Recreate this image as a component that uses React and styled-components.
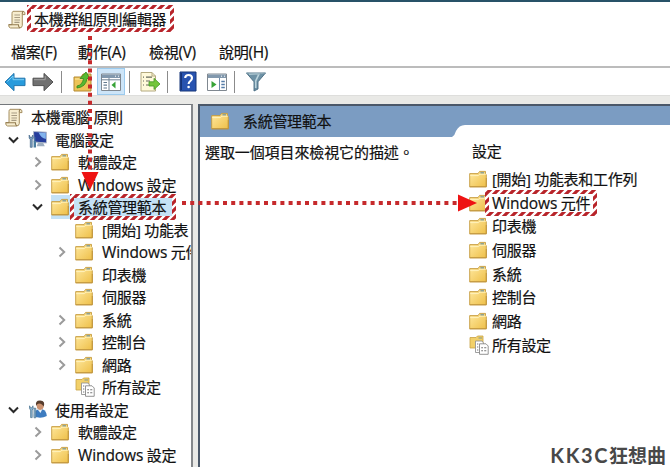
import React from "react";
import styled, { createGlobalStyle } from "styled-components";

const Global = createGlobalStyle`
  * { box-sizing: border-box; }
  body { margin: 0; background: #fff; overflow: hidden; }
`;

const Window = styled.div`
  position: relative;
  display: flex;
  flex-direction: column;
  width: 670px;
  height: 467px;
  overflow: hidden;
  background: #fff;
  border-top: 2px solid #285268;
  color: #111;
  font-family: "Open Sans", "Noto Sans CJK TC", sans-serif;
  font-size: 15px;
  letter-spacing: -0.3px;
  white-space: pre;
  -webkit-text-stroke: 0.2px #111;
  svg { display: block; flex: none; }
`;

const TitleBar = styled.header`
  display: flex;
  align-items: center;
  gap: 8px;
  height: 36px;
  padding: 0 0 2px 8px;
`;

const MenuBar = styled.nav`
  display: flex;
  height: 28px;
  padding: 0 0 1px 11px;
  align-items: center;
`;

const MenuItem = styled.span`
  flex: none;
  width: ${(p) => p.$width}px;
  line-height: 26px;
`;

const Toolbar = styled.div`
  display: flex;
  align-items: center;
  height: 29px;
  padding-left: 4px;
  border-top: 2px solid #bcbcbc;
`;

const Tool = styled.span`
  display: flex;
  align-items: center;
  justify-content: center;
  flex: none;
  width: ${(p) => (p.$active ? 28 : 22)}px;
  height: 27px;
  margin-right: ${(p) => p.$gap || 0}px;
  background: ${(p) => (p.$active ? "#cde5f8" : "transparent")};
  border: ${(p) => (p.$active ? "1px solid #9ccbee" : "0")};
`;

const Separator = styled.span`
  flex: none;
  width: 1px;
  height: 22px;
  margin-right: ${(p) => p.$gap}px;
  background: #8b8b8b;
`;

const Body = styled.main`
  display: flex;
  flex: 1;
  min-height: 0;
  gap: 5px;
  padding-top: 8px;
  background: #e9e9e6;
  border-top: 1px solid #dededc;
`;

const Tree = styled.section`
  flex: none;
  width: 193px;
  overflow: hidden;
  background: #fff;
  border-top: 1px solid #73777b;
  border-right: 2px solid #85888b;
  padding-top: 1px;
`;

const TreeRow = styled.div`
  display: flex;
  align-items: center;
  height: 22.5px;
  padding-left: ${(p) => p.$indent}px;
`;

const Chevron = styled.span`
  display: flex;
  flex: none;
  width: ${(p) => p.$width}px;
`;

const Entry = styled.span`
  display: flex;
  align-items: center;
  flex: none;
  height: 24px;
  gap: ${(p) => p.$gap}px;
  padding-right: 7px;
  background: ${(p) => (p.$selected ? "#c5e2f6" : "transparent")};
`;

const Label = styled.span`
  line-height: 22px;
`;

const Latin = styled.span`
  font-size: 15.5px;
  letter-spacing: -0.1px;
`;

const MenuKey = styled.span`
  font-size: 15.5px;
`;

const Detail = styled.section`
  display: flex;
  flex-direction: column;
  flex: 1;
  min-width: 0;
  background: #fff;
  border-top: 2px solid #4b5869;
  border-left: 2px solid #4b5869;
`;

const DetailHead = styled.div`
  display: flex;
  flex: none;
  height: 31px;
  justify-content: space-between;
  align-items: flex-end;
  background: #7b9cc2;
`;

const DetailName = styled.div`
  display: flex;
  align-items: center;
  gap: 14px;
  height: 31px;
  padding: 0 0 2px 11px;
`;

const Columns = styled.div`
  display: grid;
  grid-template-columns: 269px 1fr;
`;

const Description = styled.p`
  margin: 0;
  padding: 4px 0 0 5px;
  line-height: 22px;
  letter-spacing: -0.1px;
`;

const Settings = styled.div`
  display: flex;
  flex-direction: column;
`;

const SettingsHead = styled.div`
  height: 30px;
  padding: 3px 0 0 3px;
  line-height: 22px;
`;

const SettingRow = styled.div`
  display: flex;
  align-items: center;
  gap: ${(p) => p.$gap}px;
  height: 23.7px;
`;

const Watermark = styled.div`
  position: absolute;
  right: 4px;
  bottom: 0;
  color: #484848;
  font: 700 19px/24px "Noto Sans CJK TC", sans-serif;
  letter-spacing: 0;
  -webkit-text-stroke: 0;
`;

const WatermarkLatin = styled.span`
  font-family: Lato, sans-serif;
  font-weight: 700;
  font-size: 20px;
  letter-spacing: 1.6px;
`;

const Overlay = styled.svg`
  position: absolute;
  left: 0;
  top: -2px;
`;

const Folder = () => (
  <svg width="18" height="18" viewBox="0 0 18 18">
    <defs>
      <linearGradient id="fold" x1="0" y1="0" x2="1" y2="1">
        <stop offset="0" stopColor="#ffe9a0" />
        <stop offset="1" stopColor="#eebf48" />
      </linearGradient>
    </defs>
    <path d="M.7 3.6H9L10.6 1.4H16.5V4L17.3 4.6V16.8H.7Z" fill="url(#fold)" stroke="#c59b3d" strokeWidth=".9" />
    <path d="M1.2 5.6H9.4L11 4.2H16.8" fill="none" stroke="#fff2bd" strokeWidth="1" />
    <path d="M11.4 2.8H15" stroke="#7d9a9a" strokeWidth="1.3" />
    <path d="M.7 16.8H17.3V8" fill="none" stroke="#c09339" strokeWidth=".9" />
  </svg>
);

const AllSettings = () => (
  <svg width="20" height="20" viewBox="0 0 20 20">
    <path d="M1 2.5H7L8.5 1H14V13H1Z" fill="#f2d069" stroke="#c8a245" strokeWidth=".8" />
    <path d="M9.5 3H13" stroke="#819790" />
    <path d="M6.5 6H13L14.5 8V17.5H6.5Z" fill="#fff" stroke="#949494" strokeWidth=".9" />
    <path d="M10.5 8.8H17L19.2 11V19.3H10.5Z" fill="#fff" stroke="#888" strokeWidth=".9" />
    <path d="M8 9H9.3M8 12H9.3M8 15H9.3M12.2 12.7H14M15.2 12.7H17.3M12.2 15.8H14M15.2 15.8H17.3" stroke="#777" strokeWidth="1.1" />
  </svg>
);

const Scroll = () => (
  <svg width="18" height="19" viewBox="0 0 18 19">
    <path d="M5 1.3H15Q17.5 1.6 17 4.6H14.3V15.5Q14 18 11.5 18H2.5Q.5 17.7.7 14.6H4V3.5Q4 1.7 5 1.3Z" fill="#f7edcf" stroke="#a48e61" strokeWidth="1" />
    <path d="M14.3 4.6V3Q14.6 1.5 15.5 1.4M.8 14.8H10.4Q10.4 17.5 12 17.9" fill="none" stroke="#927b50" strokeWidth="1.1" />
    <path d="M6.4 5H12M6.4 7.5H12M6.4 10H12M6.4 12.4H11.5" stroke="#a79b83" strokeWidth="1.2" />
  </svg>
);

const Computer = () => (
  <svg width="20" height="19" viewBox="0 0 20 19">
    <path d="M5.5 1.5L18.5 2.2V13L6 12Z" fill="#263d9c" stroke="#b0b9cb" strokeWidth="1" />
    <path d="M10.5 2.5L17.8 3V9Q13 8 10.5 2.5Z" fill="#82b3ed" />
    <path d="M10 12.5H15L16.8 16.2H8.7Z" fill="#9dadbf" />
    <path d="M1.2 5Q.6 9 2.3 9.5V17.3H4.2V9.5Q6 8.6 4.8 5L4 7.3H2Z" fill="#7c9fc0" stroke="#416487" strokeWidth=".7" />
    <path d="M6.4 7V11.2H5.6V17.5H8V11.2H7.3V7Z" fill="#497c9f" />
  </svg>
);

const User = () => (
  <svg width="20" height="19" viewBox="0 0 20 19">
    <path d="M5.8 16.5Q5.5 11.5 9.2 9.7L14.5 9.2Q18.6 11 18.8 16Q13 19 5.8 16.5Z" fill="#3d7cc0" />
    <path d="M9.6 9.4L12.4 13L14.6 8.8Z" fill="#e8f2f9" />
    <ellipse cx="12.2" cy="5.5" rx="3.5" ry="4.4" fill="#cb9270" />
    <path d="M8.3 6Q6.6.3 12.2.4Q17.8.9 15.6 6.8Q14.5 3.7 11 3.5Q8.7 3.9 8.3 6Z" fill="#573d2d" />
    <path d="M1.6 5.8Q1 9.4 2.6 10V17.6H4.2V10Q6 9 4.9 5.8L4.1 7.8H2.4ZM6 8.2V17.8H7.8V8.2Z" fill="#8fb7d3" stroke="#47708d" strokeWidth=".7" />
  </svg>
);

const ArrowIcon = ({ forward }) => (
  <svg width="22" height="20" viewBox="0 0 22 20">
    <path
      d={forward ? "M21 10L12 1.4V6.2H1V13.6H12V18.7Z" : "M1 10L10 1.4V6.2H21V13.6H10V18.7Z"}
      fill={forward ? "#707070" : "#289bdc"}
      stroke={forward ? "#505050" : "#2477ae"}
      strokeWidth="1"
      strokeLinejoin="round"
    />
    <path d={forward ? "M2 7.7H13.2V4" : "M3.4 9.6L9 4V7.7H20"} fill="none" stroke={forward ? "#a0a0a0" : "#7accf3"} />
  </svg>
);

const UpFolder = () => (
  <svg width="22" height="21" viewBox="0 0 22 21">
    <path d="M2 6H9L11 3H19V20H2Z" fill="#edc458" stroke="#b58a33" />
    <path d="M3 8H18" stroke="#ffe9a2" />
    <path d="M5 15Q10.5 14 11.5 7.5H8L14 1L18 7.5H15Q14 16 5 17Z" fill="#57b931" stroke="#32871c" strokeWidth=".8" />
  </svg>
);

const PaneIcon = ({ action }) => (
  <svg width="22" height="20" viewBox="0 0 22 20">
    <path d="M1.5 2H20.5V18.5H1.5Z" fill="#fff" stroke="#808890" />
    <path d="M2 2.5H20V6H2Z" fill="#8198ad" />
    <path d="M15 4.2H16M18 4.2H19" stroke="#fff" />
    {action ? (
      <g>
        <path d="M13.5 6V18.5" stroke="#718ca7" />
        <path d="M5.5 9L10.5 12.5L5.5 16Z" fill="#37a336" />
        <path d="M15.3 9.5H18.8M15.3 12.5H18.8M15.3 15.5H18.8" stroke="#557ca7" strokeWidth="1.5" />
      </g>
    ) : (
      <g>
        <path d="M9 6V18.5M1.5 7.8H20.5" stroke="#718395" />
        <path d="M15.5 9.4L11.5 13L15.5 16.5Z" fill="#37a336" />
        <path d="M3.5 10.5H7M3.5 13.2H7M3.5 16H7" stroke="#637b90" strokeWidth="1.2" />
      </g>
    )}
  </svg>
);

const Export = () => (
  <svg width="22" height="21" viewBox="0 0 22 21">
    <path d="M2 1.5H13L16.5 5V20H2Z" fill="#fff9da" stroke="#b4aa80" />
    <path d="M13 1.5V5H16.5" fill="none" stroke="#b4aa80" />
    <path d="M4 6.2H5M4 10H5M4 14H5M7 6.2H13M7 10H11M7 14H11" stroke="#66695c" strokeWidth="1.2" />
    <path d="M10 10.8H15V7.3L21 13L15 18.5V15H10Z" fill="#75c53c" stroke="#449926" strokeWidth=".8" />
  </svg>
);

const Help = () => (
  <svg width="18" height="21" viewBox="0 0 18 21">
    <path d="M1 1H17V20H1Z" fill="#2853b0" stroke="#173778" />
    <path d="M2.2 2V19" stroke="#163273" strokeWidth="1.5" />
    <path d="M6.2 7Q6.2 4 9.6 4Q13 4 13 7Q13 9 11 10.3Q9.7 11 9.6 13" fill="none" stroke="#fff" strokeWidth="2.1" />
    <circle cx="9.6" cy="16" r="1.3" fill="#fff" />
  </svg>
);

const Filter = () => (
  <svg width="22" height="21" viewBox="0 0 22 21">
    <path d="M1.5 2H20.5L13 10.8V18L9 20V10.8Z" fill="#6d91a5" stroke="#456a80" strokeWidth=".9" />
    <path d="M4 3H14L10.7 10V17" fill="none" stroke="#bbd4dd" strokeWidth="1.6" />
    <path d="M1.5 2Q11 4.5 20.5 2" fill="none" stroke="#8eaab7" />
  </svg>
);

const ChevronIcon = ({ open }) => (
  <svg width="12" height="12" viewBox="0 0 12 12">
    <path
      d={open ? "M1 3.5L5.5 8L10 3.5" : "M1.500 1.500L6.200 6L1.500 10.500"}
      fill="none"
      stroke={open ? "#292929" : "#9b9b9b"}
      strokeWidth="2"
    />
  </svg>
);

const icons = { folder: Folder, all: AllSettings, scroll: Scroll, computer: Computer, user: User };

const rows = [
  { text: "本機電腦 原則", indent: 5, icon: "scroll", gap: 8 },
  { text: "電腦設定", indent: 8, icon: "computer", open: true, gap: 7 },
  { text: "軟體設定", indent: 34, icon: "folder" },
  { latin: "Windows", text: " 設定", indent: 34, icon: "folder" },
  { text: "系統管理範本", indent: 32, icon: "folder", open: true, selected: true },
  { text: "[開始] 功能表", indent: 58, icon: "folder", leaf: true },
  { latin: "Windows", text: " 元件", indent: 58, icon: "folder" },
  { text: "印表機", indent: 58, icon: "folder", leaf: true },
  { text: "伺服器", indent: 58, icon: "folder", leaf: true },
  { text: "系統", indent: 58, icon: "folder" },
  { text: "控制台", indent: 58, icon: "folder" },
  { text: "網路", indent: 58, icon: "folder" },
  { text: "所有設定", indent: 58, icon: "all", leaf: true, gap: 7 },
  { text: "使用者設定", indent: 8, icon: "user", open: true, gap: 7 },
  { text: "軟體設定", indent: 34, icon: "folder" },
  { latin: "Windows", text: " 設定", indent: 34, icon: "folder" },
];

const TreeItem = ({ row }) => {
  const Icon = icons[row.icon];
  return (
    <TreeRow $indent={row.indent}>
      {row.icon !== "scroll" && (
        <Chevron $width={row.indent === 8 ? 20 : row.selected ? 19 : 17}>
          {!row.leaf && <ChevronIcon open={row.open} />}
        </Chevron>
      )}
      <Entry $gap={row.gap || 9} $selected={row.selected}>
        <Icon />
        <Label>
          {row.latin && <Latin>{row.latin}</Latin>}
          {row.text}
        </Label>
      </Entry>
    </TreeRow>
  );
};

const menus = [
  { text: "檔案", key: "(F)", width: 67 },
  { text: "動作", key: "(A)", width: 71 },
  { text: "檢視", key: "(V)", width: 70 },
  { text: "說明", key: "(H)", width: 70 },
];

const settings = [
  { text: "[開始] 功能表和工作列" },
  { latin: "Windows", text: " 元件" },
  { text: "印表機" },
  { text: "伺服器" },
  { text: "系統" },
  { text: "控制台" },
  { text: "網路" },
  { text: "所有設定", icon: "all" },
];

const HatchFrame = ({ x, y, w, h }) => (
  <g>
    <path
      d={`M${x + 2} ${y + 2}H${x + w - 2}V${y + h - 2}H${x + 2}Z`}
      fill="none"
      stroke="#fff"
      strokeWidth="4"
    />
    <path
      d={`M${x + 2} ${y + 2}H${x + w - 2}V${y + h - 2}H${x + 2}Z`}
      fill="none"
      stroke="url(#hatch)"
      strokeWidth="4"
    />
  </g>
);

export default function App() {
  return (
    <Window>
      <Global />
      <TitleBar>
        <Scroll />
        <Label>本機群組原則編輯器</Label>
      </TitleBar>
      <MenuBar>
        {menus.map((m) => (
          <MenuItem key={m.key} $width={m.width}>
            {m.text}
            <MenuKey>{m.key}</MenuKey>
          </MenuItem>
        ))}
      </MenuBar>
      <Toolbar>
        <Tool $gap={6}><ArrowIcon /></Tool>
        <Tool $gap={7}><ArrowIcon forward /></Tool>
        <Separator $gap={10} />
        <Tool $gap={3}><UpFolder /></Tool>
        <Tool $active $gap={4}><PaneIcon /></Tool>
        <Separator $gap={9} />
        <Tool $gap={6}><Export /></Tool>
        <Separator $gap={9} />
        <Tool $gap={7}><Help /></Tool>
        <Tool $gap={6}><PaneIcon action /></Tool>
        <Separator $gap={10} />
        <Tool><Filter /></Tool>
      </Toolbar>
      <Body>
        <Tree>
          {rows.map((row, i) => <TreeItem key={i} row={row} />)}
        </Tree>
        <Detail>
          <DetailHead>
            <DetailName>
              <Folder />
              <Label>系統管理範本</Label>
            </DetailName>
            <svg width="218" height="12" viewBox="0 0 218 12">
              <path d="M0 12Q3 10 4 6Q7 0 13 0H218V12Z" fill="#fff" />
            </svg>
          </DetailHead>
          <Columns>
            <Description>選取一個項目來檢視它的描述。</Description>
            <Settings>
              <SettingsHead>設定</SettingsHead>
              {settings.map((s) => (
                <SettingRow key={s.text} $gap={s.icon ? 3 : 5}>
                  {s.icon ? <AllSettings /> : <Folder />}
                  <Label>
                    {s.latin && <Latin>{s.latin}</Latin>}
                    {s.text}
                  </Label>
                </SettingRow>
              ))}
            </Settings>
          </Columns>
        </Detail>
      </Body>
      <Watermark><WatermarkLatin>KK3C</WatermarkLatin>狂想曲</Watermark>
      <Overlay width="670" height="467" viewBox="0 0 670 467">
        <defs>
          <pattern id="hatch" width="8" height="8" patternUnits="userSpaceOnUse">
            <path d="M-2 2L2 -2M-2 10L10 -2M6 10L10 6" stroke="#b8242a" strokeWidth="3.2" />
          </pattern>
        </defs>
        <HatchFrame x={27} y={5} w={147} h={27} />
        <HatchFrame x={70} y={194} w={106} h={26} />
        <HatchFrame x={485} y={190} w={112} h={26} />
        <path d="M90 36V174" stroke="#c62a2c" strokeWidth="4" strokeDasharray="4 4.1" />
        <path d="M81.5 172H98.5L90 190Z" fill="#ee1313" />
        <path d="M182 203H458" stroke="#c62a2c" strokeWidth="4" strokeDasharray="4 4.2" />
        <path d="M458 194.5V211.5L477 203Z" fill="#ee1313" />
      </Overlay>
    </Window>
  );
}
